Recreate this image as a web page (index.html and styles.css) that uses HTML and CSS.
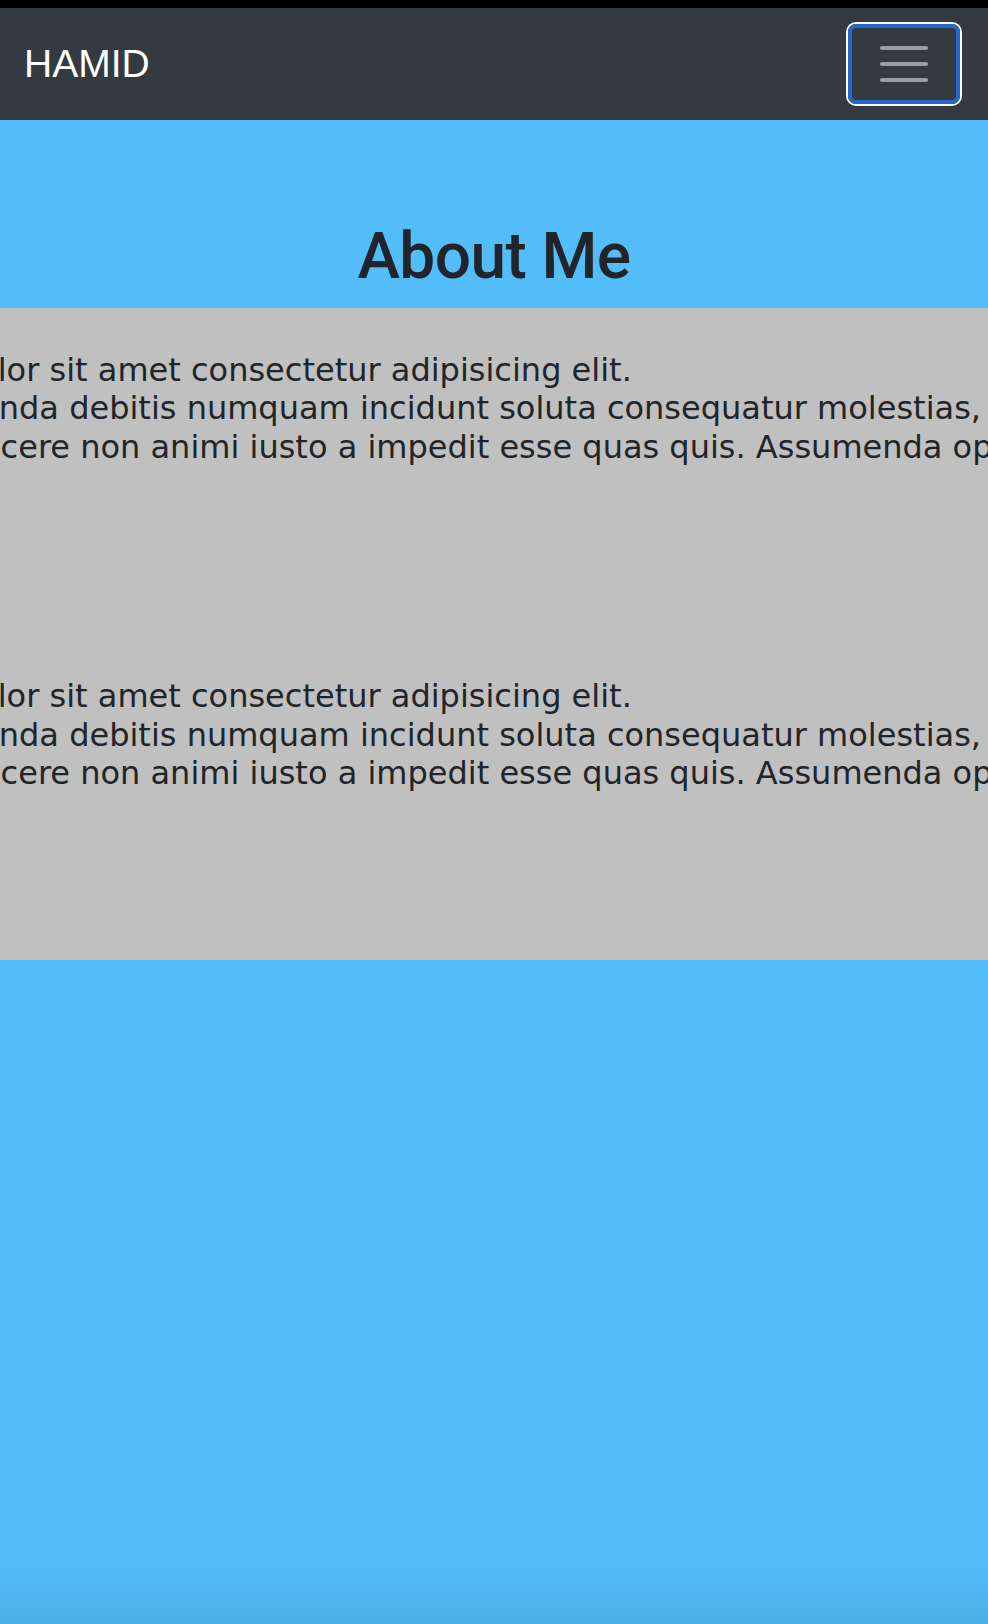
FILE: index.html
```html
<!DOCTYPE html>
<html lang="en">
<head>
<meta charset="utf-8">
<title>HAMID - About Me</title>
<link rel="stylesheet" href="styles.css">
</head>
<body>
<div class="page">
  <div class="topbar"></div>
  <nav class="navbar">
    <a class="brand" href="#">HAMID</a>
    <button class="toggler" type="button" aria-label="Toggle navigation">
      <svg class="toggler-icon" viewBox="0 0 30 30" width="60" height="60" aria-hidden="true">
        <path d="M4 7h22M4 15h22M4 23h22" stroke="rgba(255,255,255,0.5)" stroke-width="2" stroke-linecap="round" fill="none"/>
      </svg>
    </button>
  </nav>
  <header class="hero">
    <h1 class="title">About Me</h1>
  </header>
  <section class="about">
    <div class="track">
      <p class="para">
        <span class="line">Lorem ipsum dolor sit amet consectetur adipisicing elit.</span>
        <span class="line shift">Dolores assumenda debitis numquam incidunt soluta consequatur molestias, atque quae voluptates.</span>
        <span class="line">Quidem, alias facere non animi iusto a impedit esse quas quis. Assumenda optio eveniet.</span>
      </p>
      <p class="para">
        <span class="line">Lorem ipsum dolor sit amet consectetur adipisicing elit.</span>
        <span class="line shift">Dolores assumenda debitis numquam incidunt soluta consequatur molestias, atque quae voluptates.</span>
        <span class="line">Quidem, alias facere non animi iusto a impedit esse quas quis. Assumenda optio eveniet.</span>
      </p>
    </div>
  </section>
</div>
</body>
</html>
```
FILE: styles.css
```css
* { box-sizing: border-box; }

html, body {
  margin: 0;
  padding: 0;
}

body {
  background: #53bdf9;
  color: #212529;
}

.page {
  min-height: 100vh;
  display: flex;
  flex-direction: column;
  background: linear-gradient(to bottom, #53bdf9 0, #53bdf9 calc(100% - 60px), #4daee7 100%);
}

.topbar {
  height: 8px;
  background: #000;
}

.navbar {
  height: 112px;
  background: #343a40;
  display: flex;
  align-items: center;
  justify-content: space-between;
  padding: 0 28px 0 24px;
}

.brand {
  font-family: "Liberation Sans", Arial, sans-serif;
  font-size: 39px;
  color: #fff;
  text-decoration: none;
}

.toggler {
  width: 112px;
  height: 80px;
  padding: 0;
  background: transparent;
  border: 4px solid #2766cc;
  border-radius: 8px;
  box-shadow: 0 0 0 2px #fff;
  display: flex;
  align-items: center;
  justify-content: center;
}

.toggler-icon {
  display: block;
}

.hero {
  height: 188px;
  padding-top: 98px;
}

.title {
  margin: 0;
  text-align: center;
  font-family: Roboto, "Liberation Sans", sans-serif;
  font-weight: 500;
  font-size: 64px;
  letter-spacing: -0.6px;
  line-height: 77px;
  color: #212529;
}

.about {
  background: #c0c0c0;
  height: 652px;
  overflow: hidden;
  padding-top: 43px;
}

.track {
  margin-left: -260px;
  display: flex;
  flex-direction: column;
  gap: 211px;
  white-space: nowrap;
}

.para {
  margin: 0;
  font-family: "DejaVu Sans", Verdana, sans-serif;
  font-size: 32px;
  line-height: 38.4px;
  color: #212529;
}

.line {
  display: block;
}

.shift {
  padding-left: 3px;
}
```
